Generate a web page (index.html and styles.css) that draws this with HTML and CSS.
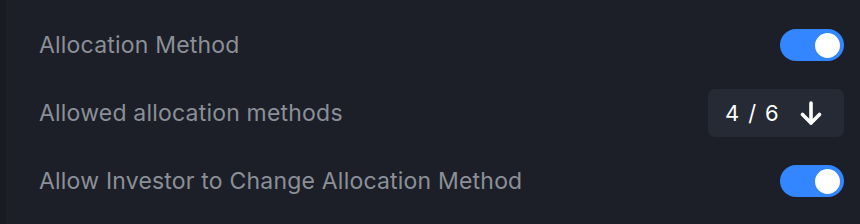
FILE: index.html
```html
<!DOCTYPE html>
<html lang="en">
<head>
    <meta charset="UTF-8">
    <title>Allocation Settings</title>
    <link rel="stylesheet" href="styles.css">
</head>
<body>
    <div class="layout">
        <div class="sidebar"></div>
        <div class="settings">
            <div class="row">
                <div class="label">Allocation Method</div>
                <div class="toggle on"><span class="knob"></span></div>
            </div>
            <div class="row">
                <div class="label">Allowed allocation methods</div>
                <button class="counter">
                    <span class="count">4 / 6</span>
                    <svg width="22" height="24" viewBox="0 0 22 24" fill="none" stroke="white" stroke-width="3.6" stroke-linecap="round" stroke-linejoin="round">
                        <line x1="11" y1="2" x2="11" y2="22"></line>
                        <polyline points="2.5,13.5 11,22 19.5,13.5"></polyline>
                    </svg>
                </button>
            </div>
            <div class="row">
                <div class="label">Allow Investor to Change Allocation Method</div>
                <div class="toggle on"><span class="knob"></span></div>
            </div>
        </div>
    </div>
</body>
</html>
```
FILE: styles.css
```css
* {
    margin: 0;
    padding: 0;
    box-sizing: border-box;
}

body {
    font-family: Inter, "Noto Sans", sans-serif;
    background: #1c1f27;
    width: 860px;
    height: 224px;
    overflow: hidden;
}

.layout {
    display: flex;
    height: 224px;
}

.sidebar {
    width: 6px;
    background: #181b22;
}

.settings {
    flex: 1;
    padding: 11px 16px 0 33px;
}

.row {
    height: 68px;
    display: flex;
    align-items: center;
    justify-content: space-between;
}

.label {
    font-size: 23px;
    letter-spacing: 0.2px;
    color: #8b8f98;
}

/* Toggle */
.toggle {
    width: 64px;
    height: 32px;
    border-radius: 16px;
    background: #3386ff;
    display: flex;
    align-items: center;
    padding: 0 4px;
}

.toggle.on {
    justify-content: flex-end;
}

.knob {
    width: 25px;
    height: 25px;
    border-radius: 50%;
    background: #fff;
}

/* Counter */
.counter {
    width: 136px;
    height: 48px;
    border: none;
    border-radius: 7px;
    background: #262a34;
    display: flex;
    align-items: center;
    gap: 20px;
    padding-left: 17px;
    color: #fff;
    font-family: inherit;
    cursor: pointer;
}

.count {
    font-size: 22px;
    letter-spacing: 1.4px;
}
```
